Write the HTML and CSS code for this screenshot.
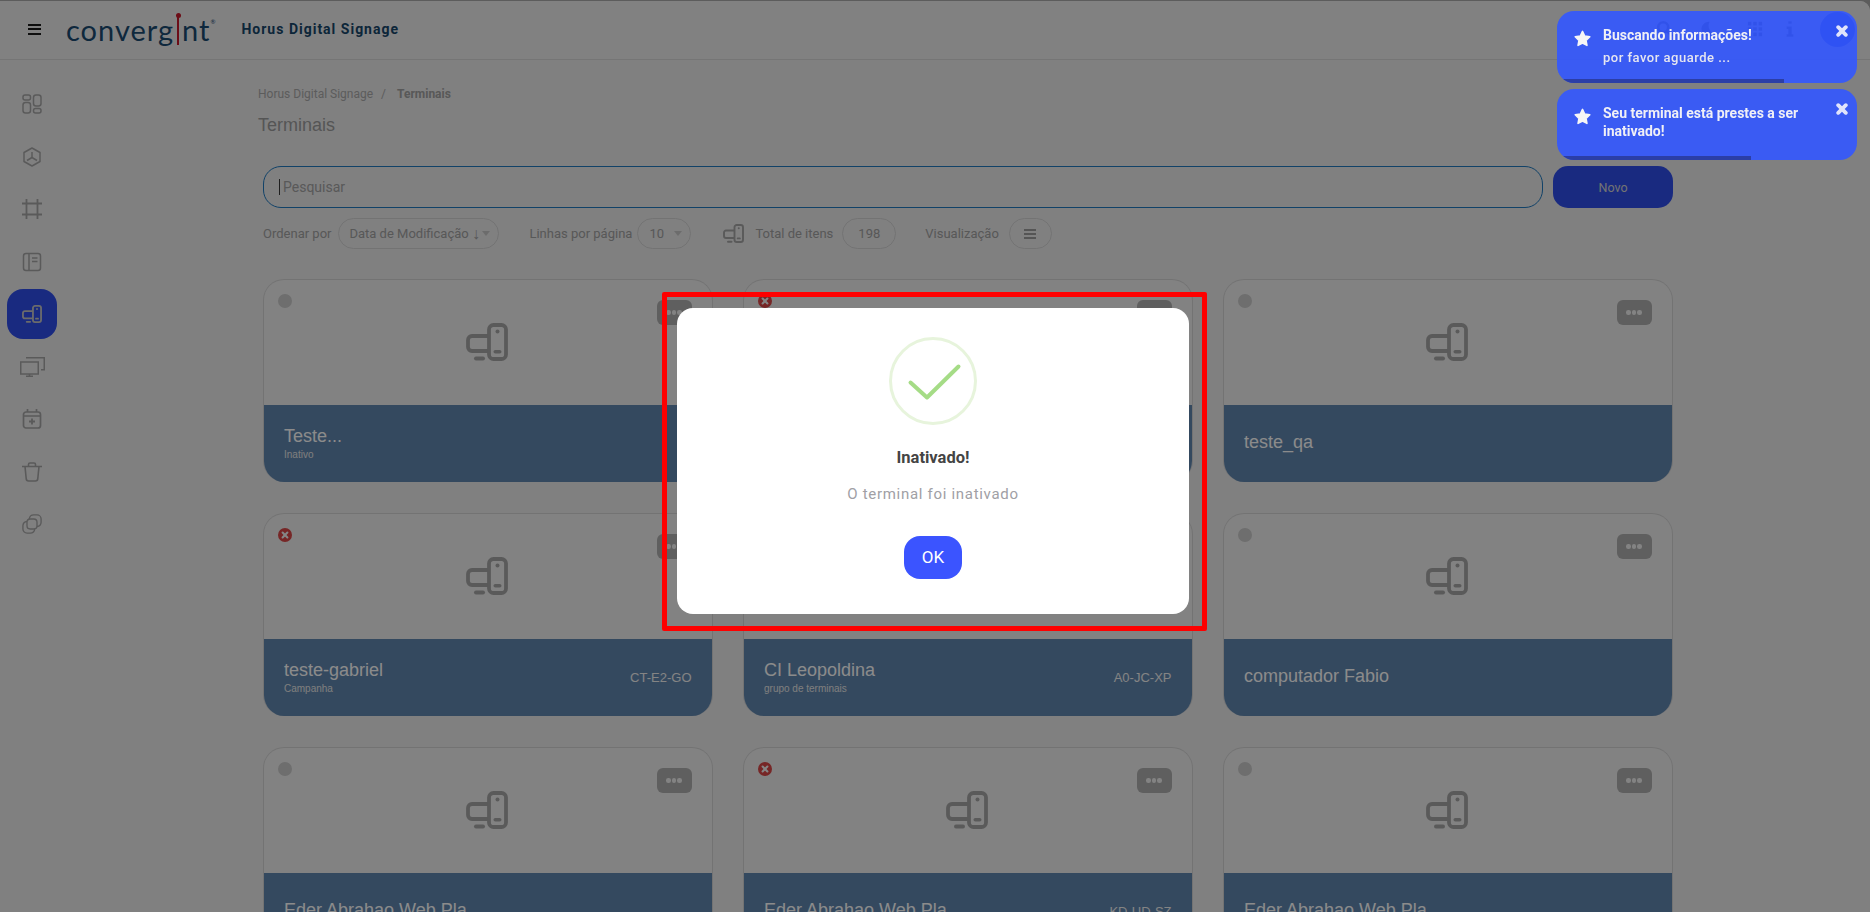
FILE: index.html
```html
<!DOCTYPE html>
<html lang="pt-BR">
<head>
<meta charset="utf-8">
<title>Terminais</title>
<link rel="stylesheet" href="styles.css">
</head>
<body>
<svg class="defs" width="0" height="0" aria-hidden="true">
  <symbol id="device" viewBox="0 0 42 38">
    <path d="M22 13H6a4 4 0 0 0-4 4v7a4 4 0 0 0 4 4h16" fill="none" stroke="currentColor" stroke-width="3.800"/>
    <rect x="23" y="2" width="17" height="34" rx="4.500" fill="none" stroke="currentColor" stroke-width="3.800"/>
    <circle cx="31.500" cy="8.500" r="2" fill="currentColor"/>
    <rect x="27.500" y="27" width="8" height="3.600" rx="1.800" fill="currentColor"/>
    <rect x="8" y="33.500" width="11" height="4" rx="2" fill="currentColor"/>
  </symbol>
  <symbol id="err" viewBox="0 0 14 14">
    <circle cx="7" cy="7" r="7" fill="#d74545"/>
    <path d="M4.600 4.600l4.800 4.800M9.400 4.600l-4.800 4.800" stroke="#f2f2f2" stroke-width="2.100" stroke-linecap="round"/>
  </symbol>
  <symbol id="star" viewBox="0 0 24 24">
    <path d="M12 2l3.100 6.600 7.200 1-5.300 5 1.300 7.200-6.300-3.500-6.300 3.500 1.300-7.200-5.300-5 7.200-1z" fill="currentColor" stroke="currentColor" stroke-width="2.200" stroke-linejoin="round"/>
  </symbol>
  <symbol id="close" viewBox="0 0 12 12">
    <path d="M2.200 2.200l7.600 7.600M9.800 2.200l-7.600 7.600" stroke="currentColor" stroke-width="3.800" stroke-linecap="round"/>
  </symbol>
</svg>

<div class="app">
  <header class="topbar">
    <button class="burger" type="button"><i></i><i></i><i></i></button>
    <div class="logo">converg<span class="logo-i">i</span>nt<sup class="logo-reg">®</sup></div>
    <div class="product">Horus Digital Signage</div>
    <div class="top-icons">
      <svg class="ti" viewBox="0 0 20 20"><circle cx="8" cy="8" r="5.500" fill="none" stroke="currentColor" stroke-width="3"/><path d="M12 12l6 6" stroke="currentColor" stroke-width="3"/></svg>
      <svg class="ti ti-moon" viewBox="0 0 20 20"><path d="M13 2a8 8 0 1 0 5 13A9 9 0 0 1 13 2z" fill="currentColor"/></svg>
      <svg class="ti ti-grid" viewBox="0 0 20 20"><path d="M2 2h4v4H2zM8 2h4v4H8zM14 2h4v4h-4zM2 8h4v4H2zM8 8h4v4H8zM14 8h4v4h-4zM2 14h4v4H2zM8 14h4v4H8zM14 14h4v4h-4z" fill="currentColor"/></svg>
      <svg class="ti ti-info" viewBox="0 0 14 20"><path d="M5 1h4v3H5zM3 7h6v9h2v3H3v-3h2v-6H3z" fill="currentColor"/></svg>
      <span class="avatar"></span>
    </div>
  </header>

  <div class="body">
    <nav class="sidebar">
      <a class="nav-item"><svg class="nav-icon" viewBox="0 0 20 20"><g fill="none" stroke="currentColor" stroke-width="1.500"><rect x="1" y="1" width="7.500" height="5" rx="2"/><rect x="11.500" y="1" width="7.500" height="11" rx="2.500"/><rect x="1" y="8.500" width="7.500" height="10.500" rx="2.500"/><rect x="11.500" y="14.500" width="7.500" height="4.500" rx="2"/></g></svg></a>
      <a class="nav-item"><svg class="nav-icon" viewBox="0 0 20 20"><g fill="none" stroke="currentColor" stroke-width="1.500" stroke-linejoin="round"><path d="M10 1l8 4.500v9L10 19l-8-4.500v-9z"/><path d="M10 5v5.500M10 10.500l5 3M10 10.500l-5 3"/></g></svg></a>
      <a class="nav-item"><svg class="nav-icon" viewBox="0 0 20 20"><path d="M4.500 0v20M15.500 0v20M0 4.500h20M0 15.500h20" fill="none" stroke="currentColor" stroke-width="1.800"/></svg></a>
      <a class="nav-item"><svg class="nav-icon" viewBox="0 0 20 20"><g fill="none" stroke="currentColor" stroke-width="1.500"><rect x="1.500" y="1.500" width="17" height="17" rx="2.500"/><path d="M7 1.500v17M10 6h5.500M10 9.500h5.500"/></g></svg></a>
      <a class="nav-item is-active"><svg class="nav-icon" viewBox="0 0 42 38"><use href="#device"/></svg></a>
      <a class="nav-item"><svg class="nav-icon nav-icon-wide" viewBox="0 0 25 20"><g fill="none" stroke="currentColor" stroke-width="1.500"><path d="M6 .75h18.250v12H21"/><rect x=".75" y="5" width="17.500" height="12"/><path d="M6 19.250h7M9.500 17v2"/></g></svg></a>
      <a class="nav-item"><svg class="nav-icon" viewBox="0 0 20 20"><g fill="none" stroke="currentColor" stroke-width="1.700"><rect x="1.500" y="3" width="17" height="16" rx="2.500"/><path d="M1.500 7h17M5.500 0v3M14.500 0v3"/><path d="M10 9.500v6M7 12.500h6" stroke-width="1.800"/></g></svg></a>
      <a class="nav-item"><svg class="nav-icon" viewBox="0 0 20 20"><g fill="none" stroke="currentColor" stroke-width="1.600" stroke-linejoin="round"><path d="M0 4.500h20M3 4.500l1.200 12a2.500 2.500 0 0 0 2.500 2.500h6.600a2.500 2.500 0 0 0 2.500-2.500L17 4.500M6.500 4.500V2.500A1.500 1.500 0 0 1 8 1h4a1.500 1.500 0 0 1 1.500 1.500v2"/></g></svg></a>
      <a class="nav-item"><svg class="nav-icon" viewBox="0 0 22 22"><g fill="none" stroke="currentColor" stroke-width="1.500"><path d="M8 5.500A5 5 0 0 1 13 1h3.500A4.500 4.500 0 0 1 21 5.500V9a5 5 0 0 1-4.500 4.800"/><path d="M14 16.500A5 5 0 0 1 9 21H5.500A4.500 4.500 0 0 1 1 16.500V13a5 5 0 0 1 4.500-4.800"/><rect x="5.500" y="5.500" width="11" height="11" rx="3.500"/></g></svg></a>
    </nav>

    <main class="content">
      <div class="crumbs"><span>Horus Digital Signage</span><span class="crumb-sep">/</span><b>Terminais</b></div>
      <h1 class="page-title">Terminais</h1>

      <div class="search-row">
        <div class="search"><span class="caret"></span>Pesquisar</div>
        <button class="btn-new" type="button">Novo</button>
      </div>

      <div class="filters">
        <span class="f-label">Ordenar por</span>
        <span class="pill pill-sort">Data de Modificação <span class="arrow">↓</span><i class="tri"></i></span>
        <span class="f-label f-lines">Linhas por página</span>
        <span class="pill pill-lines">10<i class="tri"></i></span>
        <svg class="f-device" viewBox="0 0 42 38"><use href="#device"/></svg>
        <span class="f-label f-total">Total de itens</span>
        <span class="pill pill-total">198</span>
        <span class="f-label f-view">Visualização</span>
        <span class="pill pill-view"><i class="mini-burger"></i></span>
      </div>

      <section class="grid">
        <article class="card">
          <div class="card-top"><span class="dot"></span><button class="more" type="button"><i></i><i></i><i></i></button><svg class="card-icon" viewBox="0 0 42 38"><use href="#device"/></svg></div>
          <div class="band"><div class="band-text"><div class="band-name">Teste...</div><div class="band-sub">Inativo</div></div></div>
        </article>
        <article class="card">
          <div class="card-top"><svg class="status"><use href="#err"/></svg><button class="more" type="button"><i></i><i></i><i></i></button><svg class="card-icon" viewBox="0 0 42 38"><use href="#device"/></svg></div>
          <div class="band"></div>
        </article>
        <article class="card">
          <div class="card-top"><span class="dot"></span><button class="more" type="button"><i></i><i></i><i></i></button><svg class="card-icon" viewBox="0 0 42 38"><use href="#device"/></svg></div>
          <div class="band"><div class="band-text"><div class="band-name">teste_qa</div></div></div>
        </article>

        <article class="card">
          <div class="card-top"><svg class="status"><use href="#err"/></svg><button class="more" type="button"><i></i><i></i><i></i></button><svg class="card-icon" viewBox="0 0 42 38"><use href="#device"/></svg></div>
          <div class="band"><div class="band-text"><div class="band-name">teste-gabriel</div><div class="band-sub">Campanha</div></div><div class="band-code">CT-E2-GO</div></div>
        </article>
        <article class="card">
          <div class="card-top"><svg class="status"><use href="#err"/></svg><button class="more" type="button"><i></i><i></i><i></i></button><svg class="card-icon" viewBox="0 0 42 38"><use href="#device"/></svg></div>
          <div class="band"><div class="band-text"><div class="band-name">CI Leopoldina</div><div class="band-sub">grupo de terminais</div></div><div class="band-code">A0-JC-XP</div></div>
        </article>
        <article class="card">
          <div class="card-top"><span class="dot"></span><button class="more" type="button"><i></i><i></i><i></i></button><svg class="card-icon" viewBox="0 0 42 38"><use href="#device"/></svg></div>
          <div class="band"><div class="band-text"><div class="band-name">computador Fabio</div></div></div>
        </article>

        <article class="card">
          <div class="card-top"><span class="dot"></span><button class="more" type="button"><i></i><i></i><i></i></button><svg class="card-icon" viewBox="0 0 42 38"><use href="#device"/></svg></div>
          <div class="band"><div class="band-text"><div class="band-name">Eder Abrahao Web Pla</div></div></div>
        </article>
        <article class="card">
          <div class="card-top"><svg class="status"><use href="#err"/></svg><button class="more" type="button"><i></i><i></i><i></i></button><svg class="card-icon" viewBox="0 0 42 38"><use href="#device"/></svg></div>
          <div class="band"><div class="band-text"><div class="band-name">Eder Abrahao Web Pla…</div></div><div class="band-code">KD-UD-SZ</div></div>
        </article>
        <article class="card">
          <div class="card-top"><span class="dot"></span><button class="more" type="button"><i></i><i></i><i></i></button><svg class="card-icon" viewBox="0 0 42 38"><use href="#device"/></svg></div>
          <div class="band"><div class="band-text"><div class="band-name">Eder Abrahao Web Pla</div></div></div>
        </article>
      </section>
    </main>
  </div>
</div>

<div class="backdrop"></div>

<div class="modal">
  <svg class="ok-icon" viewBox="0 0 88 88">
    <circle cx="44" cy="44" r="42.500" fill="none" stroke="#e7f4dc" stroke-width="3"/>
    <path d="M21.500 45.500L38 60.500L69.500 29.500" fill="none" stroke="#a5dc86" stroke-width="4" stroke-linecap="round" stroke-linejoin="round"/>
  </svg>
  <h2 class="modal-title">Inativado!</h2>
  <p class="modal-text">O terminal foi inativado</p>
  <button class="modal-ok" type="button">OK</button>
</div>
<div class="highlight"></div>

<div class="toasts">
  <div class="toast">
    <svg class="toast-star"><use href="#star"/></svg>
    <div class="toast-body"><div class="toast-title">Buscando informações!</div><div class="toast-msg">por favor aguarde ...</div></div>
    <svg class="toast-close"><use href="#close"/></svg>
    <span class="toast-bar toast-bar-a"></span>
  </div>
  <div class="toast toast-b">
    <svg class="toast-star"><use href="#star"/></svg>
    <div class="toast-body"><div class="toast-title">Seu terminal está prestes a ser inativado!</div></div>
    <svg class="toast-close"><use href="#close"/></svg>
    <span class="toast-bar toast-bar-b"></span>
  </div>
</div>
</body>
</html>
```

FILE: styles.css
```css
* { box-sizing: border-box; }
html, body { margin: 0; height: 100%; overflow: hidden; }
body { background: #a8a8a8; font-family: Roboto, "Liberation Sans", sans-serif; color: #9a9a9a; }
.defs { position: absolute; }
button { font-family: inherit; border: 0; padding: 0; }

.app { height: 911px; margin-top: 1px; overflow: hidden; background: #e9e9ea; border-radius: 0 10px 0 0; }

/* top bar */
.topbar { height: 59px; padding-bottom: 2px; display: flex; align-items: center; border-bottom: 1px solid #d6d6d6; background: #ececec; }
.burger { width: 13px; margin-left: 28px; display: flex; flex-direction: column; gap: 2.500px; background: none; }
.burger i { display: block; height: 2px; background: #1d1d1d; }
.logo { position: relative; margin-left: 25px; font: 400 29px/1 Lato, sans-serif; letter-spacing: 1px; color: #1a4a70; white-space: nowrap; }
.logo-i { position: relative; color: transparent; }
.logo-i::after { content: ""; position: absolute; left: 3px; top: 5px; width: 2px; height: 28px; background: #c5182a; }
.logo-i::before { content: ""; position: absolute; left: 1.500px; top: 1px; width: 5px; height: 5px; border-radius: 50%; background: #c5182a; }
.logo-reg { font-size: 6px; vertical-align: 17px; line-height: 0; letter-spacing: 0; }
.product { margin-left: 26px; font: 700 14px/1 Roboto, sans-serif; letter-spacing: 1px; color: #174569; white-space: nowrap; }
.top-icons { margin-left: auto; margin-right: 15px; display: flex; align-items: center; color: #555; }
.ti { width: 18px; height: 18px; flex: none; }
.ti-moon { margin-left: 24px; }
.ti-grid { margin-left: 30px; }
.ti-info { width: 12px; margin-left: 20px; }
.avatar { width: 35px; height: 35px; margin-left: 24px; border-radius: 50%; background: #2f4ee9; }

/* shell */
.body { display: flex; }
.sidebar { width: 258px; flex: none; padding: 19px 0 0 7px; display: flex; flex-direction: column; gap: 2.500px; color: #a4a4a4; }
.nav-item { width: 50px; height: 50px; border-radius: 16px; display: flex; align-items: center; justify-content: center; }
.nav-icon { width: 20px; height: 20px; overflow: visible; }
.nav-icon-wide { width: 25px; }
.is-active { background: #2f4ee9; color: #c4c4c4; }

/* content */
.content { width: 1415px; }
.crumbs { margin-top: 27px; font-size: 12px; line-height: 14px; color: #a8a8a8; display: flex; }
.crumb-sep { margin: 0 11px 0 8px; }
.crumbs b { font-weight: 700; color: #a0a0a0; }
.page-title { margin: 14px 0 0; font: 400 18px/20px "Liberation Sans", sans-serif; color: #9c9c9c; }

.search-row { margin: 31px 0 0 5px; display: flex; gap: 10px; }
.search { flex: 1; height: 42px; border: 1px solid #1f78bd; border-radius: 18px; padding-left: 15px; display: flex; align-items: center; font-size: 14px; color: #a2a2a2; }
.caret { width: 1px; height: 16px; margin-right: 3px; background: #3a3a3a; }
.btn-new { width: 120px; height: 42px; border-radius: 15px; background: #2f4ee9; color: #d2d2d2; font-size: 12.500px; font-weight: 400; }

.filters { margin: 10px 0 0 5px; height: 31px; display: flex; align-items: center; font-size: 13px; font-weight: 400; color: #a0a0a0; white-space: nowrap; }
.pill { height: 31px; border: 1px solid #d2d2d2; border-radius: 16px; display: flex; align-items: center; flex: none; white-space: pre; }
.arrow { font-family: "Liberation Sans", sans-serif; font-size: 16px; line-height: 14px; }
.pill-sort { width: 161px; margin-left: 7px; padding-left: 10px; }
.f-lines { margin-left: 30px; }
.pill-lines { width: 54px; margin-left: 5px; padding-left: 11px; }
.tri { width: 0; height: 0; margin-left: auto; margin-right: 8px; border: 4px solid transparent; border-top: 5px solid #c5c5c5; border-bottom: 0; }
.f-device { width: 21px; height: 19px; margin-left: 32px; color: #a4a4a4; flex: none; }
.f-total { margin-left: 11px; }
.pill-total { width: 54px; margin-left: 9px; justify-content: center; }
.f-view { margin-left: 29px; }
.pill-view { width: 43px; margin-left: 10px; justify-content: center; }
.mini-burger { width: 12px; height: 10px; border-top: 2px solid #9c9c9c; border-bottom: 2px solid #9c9c9c; position: relative; }
.mini-burger::after { content: ""; position: absolute; left: 0; right: 0; top: 2px; height: 2px; background: #9c9c9c; }

/* cards */
.grid { margin: 30px 0 0 5px; display: grid; grid-template-columns: repeat(3, 449.500px); gap: 31px 30.500px; grid-auto-rows: 203px; }
.card { border: 1px solid #d2d2d2; border-bottom: 0; border-radius: 21px; overflow: hidden; display: flex; flex-direction: column; background: #ededed; }
.card-top { position: relative; flex: 1; display: flex; align-items: center; justify-content: center; }
.card-icon { width: 42px; height: 38px; color: #a4a4a4; margin: -1px 0 0 -2px; }
.dot { position: absolute; left: 14px; top: 14px; width: 14px; height: 14px; border-radius: 50%; background: #c8c8c8; }
.status { position: absolute; left: 14px; top: 14px; width: 14px; height: 14px; }
.more { position: absolute; right: 20px; top: 20px; width: 35px; height: 25px; border-radius: 6px; background: #adadad; display: flex; align-items: center; justify-content: center; gap: 1px; }
.more i { width: 4.500px; height: 4.500px; border-radius: 50%; background: #efefef; }
.band { height: 77px; flex: none; padding: 0 20px; background: #5f85ad; display: flex; align-items: center; justify-content: space-between; font-family: "Liberation Sans", sans-serif; color: #fff; }
.band-name { font-size: 18px; line-height: 20px; color: #fdfdfd; }
.band-name:only-child { margin-top: -3px; }
.band-sub { font-size: 10px; line-height: 12px; margin-top: 3px; color: #e6e6e6; }
.band-code { font-size: 13px; color: #f0f0f0; }

/* overlay */
.backdrop { position: fixed; inset: 0; background: rgba(0, 0, 0, 0.45); }
.modal { position: fixed; left: 677px; top: 308px; width: 512px; height: 306px; border-radius: 16px; background: #fff; display: flex; flex-direction: column; align-items: center; padding-top: 29px; }
.ok-icon { width: 88px; height: 88px; flex: none; }
.modal-title { margin: 23px 0 0; font-size: 16.500px; line-height: 20px; font-weight: 700; color: #444; }
.modal-text { margin: 16px 0 0; font-size: 15px; line-height: 20px; letter-spacing: 0.7px; color: #a0a0a5; }
.modal-ok { margin-top: 32px; width: 58px; height: 43px; padding-bottom: 2px; border-radius: 16px; background: #3b54ff; color: #fff; font-size: 17px; }
.highlight { position: fixed; left: 662px; top: 292px; width: 545px; height: 339px; border: 5px solid #fe0000; border-radius: 2px; }

/* toasts */
.toasts { position: fixed; left: 1557px; top: 11px; width: 300px; display: flex; flex-direction: column; gap: 6px; }
.toast { position: relative; height: 72px; border-radius: 17px; overflow: hidden; background: rgba(50, 87, 255, 0.9); color: #fff; display: flex; padding: 15px 12px 0 17px; }
.toast-star { width: 17px; height: 17px; margin-top: 4px; flex: none; color: #f6f6f6; }
.toast-body { margin-left: 12px; width: 210px; flex: none; }
.toast-title { font-size: 14px; line-height: 18px; font-weight: 700; color: #f0f0f6; }
.toast-msg { margin-top: 5px; font-size: 13px; line-height: 18px; font-weight: 500; letter-spacing: 0.5px; color: #e6e6f0; }
.toast-close { position: absolute; right: 9px; top: 14px; width: 12px; height: 12px; color: #e0e4fb; }
.toast-bar { position: absolute; left: 0; bottom: 0; height: 4px; background: #2b3ea6; }
.toast-bar-a { width: 227px; }
.toast-bar-b { width: 194px; }
.toast-b { height: 71px; }
```
